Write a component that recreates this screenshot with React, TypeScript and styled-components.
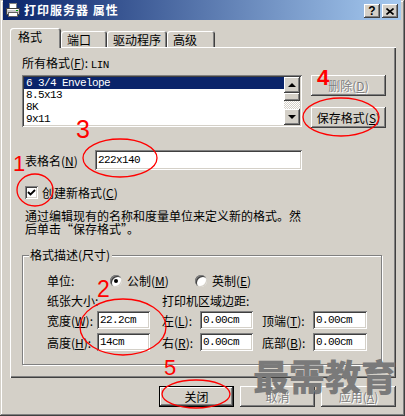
import styled, { createGlobalStyle } from 'styled-components';

const FACE = '#d4d0c8';

const GlobalStyle = createGlobalStyle`
  html, body { margin: 0; padding: 0; background: ${FACE}; }
  body { font-family: "Noto Sans CJK SC", "Liberation Sans", sans-serif; }
  u { text-decoration: underline; text-underline-offset: 1px; }
`;

const raised = `box-shadow: inset -1px -1px #404040, inset 1px 1px #fff, inset -2px -2px #808080, inset 2px 2px ${FACE};`;
const sunken = `box-shadow: inset 1px 1px #808080, inset -1px -1px #fff, inset 2px 2px #404040, inset -2px -2px ${FACE};`;

const formats = ['6 3/4 Envelope', '8.5x13', '8K', '9x11'];

const ellipses = [
  { cx: 341, cy: 117, rx: 38, ry: 19 },
  { cx: 120, cy: 158, rx: 37, ry: 19 },
  { cx: 35, cy: 190, rx: 18, ry: 16 },
  { cx: 123, cy: 327, rx: 43, ry: 28 },
  { cx: 196, cy: 394, rx: 34, ry: 14 },
];

export default function App() {
  return (
    <>
      <GlobalStyle />
      <Window>
        <TitleBar>
          <svg width="16" height="16" viewBox="0 0 16 16">
            <rect x="4.5" y="1.5" width="7" height="6" fill="#fff" stroke="#808080" />
            <path d="M1.5 6.5h13v6h-13z" fill="#c8c8c8" stroke="#404040" />
            <path d="M2.5 7.5h11" stroke="#fff" />
            <rect x="3.5" y="10.5" width="9" height="4" fill="#fff" stroke="#606060" />
            <rect x="11" y="8" width="2" height="1" fill="#00a000" />
          </svg>
          <TitleText>打印服务器 属性</TitleText>
          <CaptionButtons>
            <CaptionButton>?</CaptionButton>
            <CaptionButton>
              <svg width="8" height="7" viewBox="0 0 8 7">
                <path d="M0.5 0.5L7.5 6.5M7.5 0.5L0.5 6.5" stroke="#000" strokeWidth="1.6" />
              </svg>
            </CaptionButton>
          </CaptionButtons>
        </TitleBar>

        <Body>
          <TabStrip>
            <Tab $active $w={51}>格式</Tab>
            <Tab $w={46}>端口</Tab>
            <Tab $w={60}>驱动程序</Tab>
            <Tab $w={48}>高级</Tab>
          </TabStrip>

          <Panel>
            <FieldLabel>
              所有格式(<u>F</u>): <Mono>LIN</Mono>
            </FieldLabel>
            <ListRow>
              <ListBox>
                <ListItems>
                  {formats.map((f, i) => (
                    <ListItem key={f} $selected={i === 0}>
                      {f}
                    </ListItem>
                  ))}
                </ListItems>
                <ScrollBar>
                  <ScrollButton>
                    <Arrow $up />
                  </ScrollButton>
                  <ScrollThumb />
                  <ScrollTrack />
                  <ScrollButton>
                    <Arrow />
                  </ScrollButton>
                </ScrollBar>
              </ListBox>
              <SideButtons>
                <Button $disabled>
                  删除(<u>D</u>)
                </Button>
                <Button>
                  保存格式(<u>S</u>)
                </Button>
              </SideButtons>
            </ListRow>

            <NameRow>
              <NameLabel>
                表格名(<u>N</u>)
              </NameLabel>
              <TextInput $w={207} $h={20} readOnly value="222x140" />
            </NameRow>

            <CheckRow>
              <CheckBox>
                <svg width="9" height="9" viewBox="0 0 9 9">
                  <path d="M1 4l2.5 2.5L8 2" stroke="#000" strokeWidth="1.8" fill="none" />
                </svg>
              </CheckBox>
              <span>
                创建新格式(<u>C</u>)
              </span>
            </CheckRow>

            <Description>
              通过编辑现有的名称和度量单位来定义新的格式。然
              <br />
              后单击“保存格式”。
            </Description>

            <GroupBox>
              <Legend>格式描述(尺寸)</Legend>
              <UnitRow>
                <UnitLabel>单位:</UnitLabel>
                <RadioOption>
                  <Radio $checked />
                  <span>
                    公制(<u>M</u>)
                  </span>
                </RadioOption>
                <RadioOption $gap={26}>
                  <Radio />
                  <span>
                    英制(<u>E</u>)
                  </span>
                </RadioOption>
              </UnitRow>
              <SizeGrid>
                <GridText $span={2}>纸张大小:</GridText>
                <GridText $span={4}>打印机区域边距:</GridText>

                <GridText>
                  宽度(<u>W</u>):
                </GridText>
                <div>
                  <TextInput $w={53} $h={18} readOnly value="22.2cm" />
                </div>
                <GridText>
                  左(<u>L</u>):
                </GridText>
                <div>
                  <TextInput $w={53} $h={18} readOnly value="0.00cm" />
                </div>
                <GridText>
                  顶端(<u>T</u>):
                </GridText>
                <div>
                  <TextInput $w={54} $h={18} readOnly value="0.00cm" />
                </div>

                <GridText>
                  高度(<u>H</u>):
                </GridText>
                <div>
                  <TextInput $w={53} $h={18} readOnly value="14cm" />
                </div>
                <GridText>
                  右(<u>R</u>):
                </GridText>
                <div>
                  <TextInput $w={53} $h={18} readOnly value="0.00cm" />
                </div>
                <GridText>
                  底部(<u>B</u>):
                </GridText>
                <div>
                  <TextInput $w={54} $h={18} readOnly value="0.00cm" />
                </div>
              </SizeGrid>
            </GroupBox>
          </Panel>

          <Footer>
            <Button $default>关闭</Button>
            <Button $disabled>取消</Button>
            <Button $disabled>
              应用(<u>A</u>)
            </Button>
          </Footer>
        </Body>

        <Watermark>最需教育</Watermark>
        <Annotations width="405" height="416" viewBox="0 0 405 416">
          {ellipses.map((e, i) => (
            <ellipse key={i} {...e} fill="none" stroke="#ff0000" strokeWidth="1.3" />
          ))}
        </Annotations>
        <Mark $x={13} $y={153}>1</Mark>
        <Mark $x={97} $y={278} $size={23}>2</Mark>
        <Mark $x={76} $y={117} $size={25}>3</Mark>
        <Mark $x={317} $y={67} $bold>4</Mark>
        <Mark $x={164} $y={357}>5</Mark>
      </Window>
    </>
  );
}

const Window = styled.div`
  position: relative;
  width: 405px;
  height: 416px;
  box-sizing: border-box;
  padding: 0 4px 3px 3px;
  background: ${FACE};
  box-shadow: inset -1px -1px #404040, inset 1px 1px ${FACE}, inset -2px -2px #808080, inset 2px 2px #fff;
  display: flex;
  flex-direction: column;
  font-size: 12px;
  color: #000;
  overflow: hidden;
`;

const TitleBar = styled.div`
  height: 20px;
  flex-shrink: 0;
  display: flex;
  align-items: center;
  padding: 0 3px 0 2px;
  background: linear-gradient(to right, #0a246a, #a6caf0);
`;

const TitleText = styled.span`
  margin-left: 3px;
  color: #fff;
  font-weight: bold;
  font-size: 12px;
  letter-spacing: 1px;
  line-height: 14px;
`;

const CaptionButtons = styled.div`
  margin-left: auto;
  padding-top: 2px;
  display: flex;
  gap: 2px;
`;

const CaptionButton = styled.div`
  width: 16px;
  height: 14px;
  background: ${FACE};
  ${raised}
  display: flex;
  align-items: center;
  justify-content: center;
  font-family: "Liberation Sans", sans-serif;
  font-weight: bold;
  font-size: 12px;
  line-height: 12px;
`;

const Body = styled.div`
  flex: 1;
  display: flex;
  flex-direction: column;
  padding: 8px 5px 0 7px;
`;

const TabStrip = styled.div`
  height: 19px;
  display: flex;
  align-items: flex-end;
`;

const Tab = styled.div<{ $active?: boolean; $w: number }>`
  position: relative;
  z-index: ${(p) => (p.$active ? 1 : 0)};
  width: ${(p) => p.$w}px;
  height: ${(p) => (p.$active ? 20 : 16)}px;
  margin-bottom: ${(p) => (p.$active ? -1 : 0)}px;
  box-sizing: border-box;
  padding: 2px 0 0 ${(p) => (p.$active ? 8 : 6)}px;
  line-height: 14px;
  background: ${FACE};
  border-radius: 3px 3px 0 0;
  box-shadow: inset 1px 1px #fff, inset -1px 0 #404040, inset -2px 0 #808080;
`;

const Panel = styled.div`
  height: 331px;
  box-sizing: border-box;
  padding: 9px 10px 0 12px;
  display: flex;
  flex-direction: column;
  box-shadow: inset 1px 1px #fff, inset -1px -1px #404040, inset -2px -2px #808080;
`;

const FieldLabel = styled.div`
  line-height: 14px;
`;

const Mono = styled.span`
  font-family: "Liberation Mono", monospace;
  font-size: 11px;
  letter-spacing: -0.6px;
`;

const ListRow = styled.div`
  margin-top: 3px;
  display: flex;
  align-items: flex-start;
`;

const ListBox = styled.div`
  width: 280px;
  height: 52px;
  box-sizing: border-box;
  padding: 2px;
  display: flex;
  background: #fff;
  ${sunken}
`;

const ListItems = styled.div`
  flex: 1;
  display: flex;
  flex-direction: column;
`;

const ListItem = styled.div<{ $selected?: boolean }>`
  height: 12px;
  line-height: 12px;
  padding-left: 2px;
  font-family: "Liberation Mono", monospace;
  font-size: 11px;
  letter-spacing: -0.6px;
  white-space: pre;
  background: ${(p) => (p.$selected ? '#0a246a' : 'transparent')};
  color: ${(p) => (p.$selected ? '#fff' : '#000')};
`;

const ScrollBar = styled.div`
  width: 16px;
  display: flex;
  flex-direction: column;
`;

const ScrollButton = styled.div`
  height: 16px;
  background: ${FACE};
  ${raised}
  display: flex;
  align-items: center;
  justify-content: center;
`;

const Arrow = styled.div<{ $up?: boolean }>`
  width: 0;
  height: 0;
  border-left: 4px solid transparent;
  border-right: 4px solid transparent;
  ${(p) => (p.$up ? 'border-bottom: 4px solid #000;' : 'border-top: 4px solid #000;')}
`;

const ScrollThumb = styled.div`
  height: 8px;
  background: ${FACE};
  ${raised}
`;

const ScrollTrack = styled.div`
  flex: 1;
  background: repeating-conic-gradient(#fff 0 25%, ${FACE} 0 50%) 0 0 / 2px 2px;
`;

const SideButtons = styled.div`
  margin-left: 9px;
  display: flex;
  flex-direction: column;
  gap: 11px;
`;

const Button = styled.div<{ $disabled?: boolean; $default?: boolean }>`
  width: 75px;
  height: 21px;
  box-sizing: border-box;
  display: flex;
  align-items: center;
  justify-content: center;
  background: ${FACE};
  line-height: 14px;
  color: ${(p) => (p.$disabled ? '#808080' : '#000')};
  text-shadow: ${(p) => (p.$disabled ? '1px 1px #fff' : 'none')};
  box-shadow: ${(p) =>
    p.$default
      ? `inset 0 0 0 1px #000, inset -2px -2px #404040, inset 2px 2px #fff, inset -3px -3px #808080, inset 3px 3px ${FACE}`
      : `inset -1px -1px #404040, inset 1px 1px #fff, inset -2px -2px #808080, inset 2px 2px ${FACE}`};
`;

const NameRow = styled.div`
  margin-top: 22px;
  padding-left: 3px;
  display: flex;
  align-items: center;
`;

const NameLabel = styled.span`
  width: 70px;
`;

const TextInput = styled.input<{ $w: number; $h: number }>`
  display: block;
  width: ${(p) => p.$w}px;
  height: ${(p) => p.$h}px;
  box-sizing: border-box;
  margin: 0;
  padding: 0 0 0 3px;
  border: none;
  outline: none;
  background: #fff;
  ${sunken}
  font-family: "Liberation Mono", monospace;
  font-size: 11px;
  letter-spacing: -0.6px;
  color: #000;
`;

const CheckRow = styled.div`
  margin-top: 16px;
  padding-left: 3px;
  height: 13px;
  display: flex;
  align-items: center;
  gap: 4px;
  line-height: 13px;
`;

const CheckBox = styled.div`
  width: 13px;
  height: 13px;
  box-sizing: border-box;
  background: #fff;
  ${sunken}
  display: flex;
  align-items: center;
  justify-content: center;
`;

const Description = styled.div`
  margin-top: 10px;
  padding-left: 3px;
  line-height: 13px;
  white-space: nowrap;
`;

const GroupBox = styled.div`
  position: relative;
  margin-top: 20px;
  width: 360px;
  height: 110px;
  box-sizing: border-box;
  padding: 18px 0 0 24px;
  border: 1px solid #808080;
  box-shadow: inset 1px 1px #fff, 1px 1px #fff;
`;

const Legend = styled.span`
  position: absolute;
  top: -8px;
  left: 6px;
  padding: 0 2px 0 1px;
  line-height: 14px;
  background: ${FACE};
`;

const UnitRow = styled.div`
  height: 13px;
  display: flex;
  align-items: center;
  line-height: 13px;
`;

const UnitLabel = styled.span`
  width: 63px;
`;

const RadioOption = styled.div<{ $gap?: number }>`
  display: flex;
  align-items: center;
  gap: 5px;
  margin-left: ${(p) => p.$gap ?? 0}px;
`;

const Radio = styled.div<{ $checked?: boolean }>`
  width: 12px;
  height: 12px;
  box-sizing: border-box;
  border-radius: 50%;
  background: #fff;
  box-shadow: inset 1px 1px #808080, inset -1px -1px ${FACE}, inset 2px 2px #404040;
  display: flex;
  align-items: center;
  justify-content: center;
  &::after {
    content: '';
    width: 4px;
    height: 4px;
    border-radius: 50%;
    background: ${(p) => (p.$checked ? '#000' : 'transparent')};
  }
`;

const SizeGrid = styled.div`
  margin-top: 6px;
  display: grid;
  grid-template-columns: 50px 65px 38px 62px 51px 54px;
  grid-template-rows: 14px 18px 18px;
  row-gap: 4px;
`;

const GridText = styled.span<{ $span?: number }>`
  grid-column: span ${(p) => p.$span ?? 1};
  align-self: center;
  line-height: 13px;
  white-space: nowrap;
`;

const Footer = styled.div`
  margin-top: 8px;
  display: flex;
  justify-content: flex-end;
  gap: 6px;
`;

const Watermark = styled.span`
  position: absolute;
  left: 253px;
  top: 357px;
  font-size: 36px;
  line-height: 36px;
  font-weight: 900;
  color: #7a7a7a;
  white-space: nowrap;
  pointer-events: none;
`;

const Annotations = styled.svg`
  position: absolute;
  left: 0;
  top: 0;
  pointer-events: none;
`;

const Mark = styled.span<{ $x: number; $y: number; $size?: number; $bold?: boolean }>`
  position: absolute;
  left: ${(p) => p.$x}px;
  top: ${(p) => p.$y}px;
  font-family: "Liberation Sans", sans-serif;
  font-size: ${(p) => p.$size ?? 22}px;
  line-height: 1;
  font-weight: ${(p) => (p.$bold ? 'bold' : 'normal')};
  color: #ff0000;
  pointer-events: none;
`;
